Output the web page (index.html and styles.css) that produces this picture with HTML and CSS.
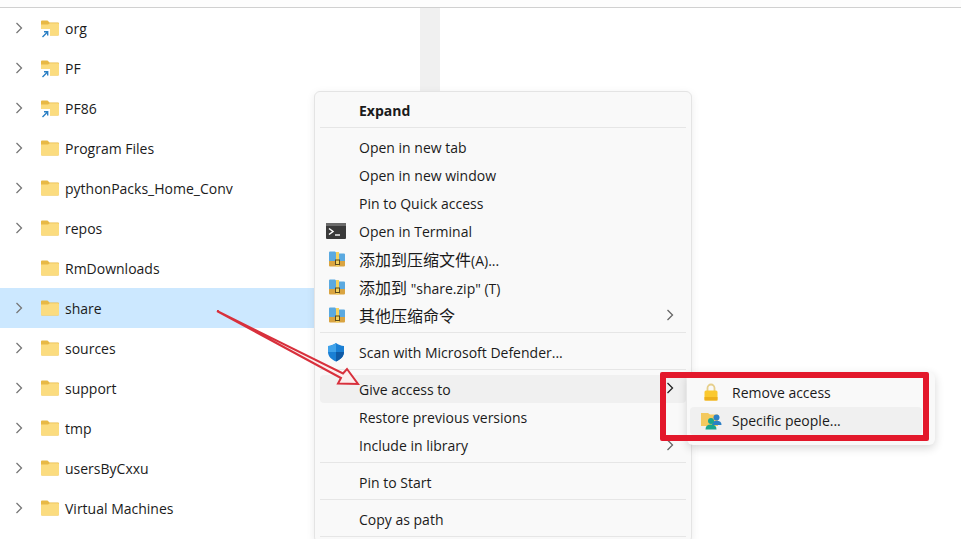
FILE: index.html
```html
<!DOCTYPE html>
<html>
    <head>
        <title>share - File Explorer</title>
        <link rel="stylesheet" href="styles.css">
    </head>
    <body>
      <svg class="defs" width="0" height="0">
        <symbol id="chevron" viewBox="0 0 10 14">
          <path d="M2.5 2 L7.5 7 L2.5 12" fill="none" stroke="currentColor" stroke-width="1.3"/>
        </symbol>
        <symbol id="folder" viewBox="0 0 18 16">
          <path d="M0 1.5 Q0 .5 1 .5 H6.5 L8.5 2.5 H17 Q18 2.5 18 3.5 V14.5 Q18 15.5 17 15.5 H1 Q0 15.5 0 14.5 Z" fill="#e8b945"/>
          <path d="M0 4.5 H7 L8.8 3.2 H17 Q18 3.2 18 4.2 V14.5 Q18 15.5 17 15.5 H1 Q0 15.5 0 14.5 Z" fill="#fbdc7f"/>
        </symbol>
        <symbol id="archive" viewBox="0 0 20 20">
          <path d="M3 3.5 Q3 2.5 4 2.5 H9 L11 4.5 H18 Q19 4.5 19 5.5 V12 H3 Z" fill="#5aa9e0"/>
          <path d="M3 12 H19 V16.5 Q19 17.5 18 17.5 H4 Q3 17.5 3 16.5 Z" fill="#d9a441"/>
          <rect x="10" y="3" width="3" height="14.5" fill="#f5d25e"/>
          <rect x="9.5" y="11" width="4" height="4.5" fill="none" stroke="#5b4a1e" stroke-width="1"/>
        </symbol>
      </svg>

      <div class="topbar"></div>
      <div class="panes">
        <ul class="tree">
          <li class="tree-row"><svg class="chev"><use href="#chevron"/></svg><span class="folder link"><svg class="folder-img"><use href="#folder"/></svg><svg class="link-badge" viewBox="0 0 10 10"><rect width="10" height="10" fill="#fff"/><path d="M2.5 8 L7.5 3 M4 2.8 H7.7 V6.5" fill="none" stroke="#2a7fc4" stroke-width="1.4"/></svg></span>org</li>
          <li class="tree-row"><svg class="chev"><use href="#chevron"/></svg><span class="folder link"><svg class="folder-img"><use href="#folder"/></svg><svg class="link-badge" viewBox="0 0 10 10"><rect width="10" height="10" fill="#fff"/><path d="M2.5 8 L7.5 3 M4 2.8 H7.7 V6.5" fill="none" stroke="#2a7fc4" stroke-width="1.4"/></svg></span>PF</li>
          <li class="tree-row"><svg class="chev"><use href="#chevron"/></svg><span class="folder link"><svg class="folder-img"><use href="#folder"/></svg><svg class="link-badge" viewBox="0 0 10 10"><rect width="10" height="10" fill="#fff"/><path d="M2.5 8 L7.5 3 M4 2.8 H7.7 V6.5" fill="none" stroke="#2a7fc4" stroke-width="1.4"/></svg></span>PF86</li>
          <li class="tree-row"><svg class="chev"><use href="#chevron"/></svg><span class="folder"><svg class="folder-img"><use href="#folder"/></svg></span>Program Files</li>
          <li class="tree-row"><svg class="chev"><use href="#chevron"/></svg><span class="folder"><svg class="folder-img"><use href="#folder"/></svg></span>pythonPacks_Home_Conv</li>
          <li class="tree-row"><svg class="chev"><use href="#chevron"/></svg><span class="folder"><svg class="folder-img"><use href="#folder"/></svg></span>repos</li>
          <li class="tree-row"><span class="chev"></span><span class="folder"><svg class="folder-img"><use href="#folder"/></svg></span>RmDownloads</li>
          <li class="tree-row selected"><svg class="chev"><use href="#chevron"/></svg><span class="folder"><svg class="folder-img"><use href="#folder"/></svg></span>share</li>
          <li class="tree-row"><svg class="chev"><use href="#chevron"/></svg><span class="folder"><svg class="folder-img"><use href="#folder"/></svg></span>sources</li>
          <li class="tree-row"><svg class="chev"><use href="#chevron"/></svg><span class="folder"><svg class="folder-img"><use href="#folder"/></svg></span>support</li>
          <li class="tree-row"><svg class="chev"><use href="#chevron"/></svg><span class="folder"><svg class="folder-img"><use href="#folder"/></svg></span>tmp</li>
          <li class="tree-row"><svg class="chev"><use href="#chevron"/></svg><span class="folder"><svg class="folder-img"><use href="#folder"/></svg></span>usersByCxxu</li>
          <li class="tree-row"><svg class="chev"><use href="#chevron"/></svg><span class="folder"><svg class="folder-img"><use href="#folder"/></svg></span>Virtual Machines</li>
        </ul>
        <div class="scroll-track"></div>
      </div>

      <div class="menu">
        <div class="menu-row strong"><span class="menu-icon"></span>Expand</div>
        <hr class="sep">
        <div class="menu-row"><span class="menu-icon"></span>Open in new tab</div>
        <div class="menu-row"><span class="menu-icon"></span>Open in new window</div>
        <div class="menu-row"><span class="menu-icon"></span>Pin to Quick access</div>
        <div class="menu-row">
          <span class="menu-icon">
            <svg viewBox="0 0 20 20" width="20" height="20"><rect y="2" width="20" height="16" rx="1" fill="#3a3a3a"/><rect y="2" width="20" height="3" fill="#6b6b6b"/><path d="M3 7.5 L7 10.5 L3 13.5" fill="none" stroke="#fff" stroke-width="1.5"/><path d="M9 14 H14" stroke="#fff" stroke-width="1.4"/></svg>
          </span>Open in Terminal</div>
        <div class="menu-row"><span class="menu-icon"><svg width="20" height="20"><use href="#archive"/></svg></span><span><span class="cjk">添加到压缩文件</span>(A)...</span></div>
        <div class="menu-row"><span class="menu-icon"><svg width="20" height="20"><use href="#archive"/></svg></span><span><span class="cjk">添加到</span> "share.zip" (T)</span></div>
        <div class="menu-row"><span class="menu-icon"><svg width="20" height="20"><use href="#archive"/></svg></span><span class="cjk">其他压缩命令</span><svg class="menu-chev"><use href="#chevron"/></svg></div>
        <hr class="sep">
        <div class="menu-row">
          <span class="menu-icon">
            <svg viewBox="0 0 20 20" width="20" height="20"><path d="M10 1 C12.5 3 15 3.6 18 4 V10 C18 14.5 14.5 17.5 10 19.5 C5.5 17.5 2 14.5 2 10 V4 C5 3.6 7.5 3 10 1 Z" fill="#1a7fd4"/><path d="M10 1 V10 H2 V4 C5 3.6 7.5 3 10 1 Z" fill="#3fa2ea"/><path d="M10 10 H18 C18 14.5 14.5 17.5 10 19.5 Z" fill="#0f5aa6"/></svg>
          </span>Scan with Microsoft Defender...</div>
        <hr class="sep">
        <div class="menu-row hover"><span class="menu-icon"></span>Give access to<svg class="menu-chev dark"><use href="#chevron"/></svg></div>
        <div class="menu-row"><span class="menu-icon"></span>Restore previous versions</div>
        <div class="menu-row"><span class="menu-icon"></span>Include in library<svg class="menu-chev"><use href="#chevron"/></svg></div>
        <hr class="sep">
        <div class="menu-row"><span class="menu-icon"></span>Pin to Start</div>
        <hr class="sep">
        <div class="menu-row"><span class="menu-icon"></span>Copy as path</div>
        <hr class="sep">
      </div>

      <div class="submenu">
        <div class="sub-row">
          <span class="sub-icon">
            <svg viewBox="0 0 16 20" width="16" height="20"><path d="M4.5 9 V6 A3.5 3.5 0 0 1 11.5 6 V9" fill="none" stroke="#e6cf8c" stroke-width="1.8"/><rect x="1.5" y="8.5" width="13" height="10" rx="1.5" fill="#fbc92f"/><rect x="1.5" y="15" width="13" height="3.5" fill="#eeb01c"/></svg>
          </span>Remove access</div>
        <div class="sub-row hover">
          <span class="sub-icon">
            <svg viewBox="0 0 21 19" width="21" height="19"><path d="M0 2 H7 L9 3.5 H17 V15 H0 Z" fill="#f3c95f"/><circle cx="15.5" cy="6.5" r="3" fill="#2c7fc6"/><path d="M11 14 Q11 9.8 15.5 9.8 Q20.5 9.8 20.5 14 Z" fill="#2c7fc6"/><circle cx="10" cy="10" r="3" fill="#1aa58e"/><path d="M4.5 18.5 Q4.5 13.5 10 13.5 Q15.5 13.5 15.5 18.5 Z" fill="#1aa58e"/></svg>
          </span>Specific people...</div>
      </div>

      <div class="red-box"></div>

      <svg class="arrow" width="961" height="539" viewBox="0 0 961 539">
        <path d="M217 311 L343 373.5 L347 369 L358 384 L338 383.5 L341 378 Z" fill="#fbeeee" stroke="#d8303c" stroke-width="2" stroke-linejoin="miter"/>
      </svg>
    </body>
</html>
```

FILE: styles.css
```css
html, body {
    margin: 0px;
    height: 100%;
    overflow: hidden;
}
body {
    position: relative;
    background-color: #ffffff;
    color: #1b1b1b;
    font-family: "Open Sans", "Noto Sans CJK SC", sans-serif;
    font-size: 14px;
}
.defs {
    position: absolute;
}
.topbar {
    height: 7px;
    background-color: #fdfdfd;
    border-bottom: 1px solid #d0d0d0;
}
.panes {
    display: flex;
}
.tree {
    width: 420px;
    margin: 0px;
    padding: 0px;
    list-style: none;
}
.tree-row {
    height: 40px;
    display: flex;
    align-items: center;
    padding-left: 14px;
}
.tree-row.selected {
    background-color: #cce8ff;
}
.chev {
    width: 10px;
    height: 14px;
    color: #777777;
    margin-right: 17px;
}
.folder {
    position: relative;
    width: 18px;
    height: 16px;
    margin-right: 6px;
}
.folder-img {
    width: 18px;
    height: 16px;
    display: block;
}
.link-badge {
    position: absolute;
    left: -1px;
    bottom: -3px;
    width: 10px;
    height: 10px;
}
.scroll-track {
    width: 20px;
    height: 531px;
    background-color: #f0f0f0;
}
.menu {
    position: absolute;
    left: 314px;
    top: 91px;
    width: 378px;
    box-sizing: border-box;
    padding: 4px 5px 0px;
    background-color: #f9f9f9;
    border: 1px solid #e4e4e4;
    border-radius: 6px;
    box-shadow: 0px 2px 8px rgba(0, 0, 0, 0.08);
}
.menu-row {
    height: 28px;
    display: flex;
    align-items: center;
    position: relative;
    border-radius: 4px;
}
.menu-row.strong {
    font-weight: 700;
}
.menu-row.hover {
    background-color: #f0f0f0;
}
.menu-icon {
    width: 33px;
    padding-left: 6px;
    display: flex;
    align-items: center;
    flex: none;
}
.cjk {
    font-size: 16px;
}
.menu-chev {
    position: absolute;
    right: 11px;
    width: 10px;
    height: 14px;
    color: #666666;
}
.menu-chev.dark {
    color: #222222;
    top: 6px;
}
.sep {
    height: 1px;
    margin: 3px 0px 5px;
    border: 0px;
    background-color: #e6e6e6;
}
.submenu {
    position: absolute;
    left: 687px;
    top: 372px;
    width: 248px;
    height: 73px;
    box-sizing: border-box;
    padding: 6px 13px 0px 3px;
    background-color: #f9f9f9;
    border-radius: 6px;
    box-shadow: 0px 3px 10px rgba(0, 0, 0, 0.16);
}
.sub-row {
    height: 28.5px;
    display: flex;
    align-items: center;
    border-radius: 4px;
}
.sub-row.hover {
    background-color: #f0f0f0;
}
.sub-icon {
    width: 42px;
    padding-right: 0px;
    display: flex;
    align-items: center;
    justify-content: center;
    flex: none;
}
.red-box {
    position: absolute;
    left: 660px;
    top: 372px;
    width: 257px;
    height: 57px;
    border: 6px solid #e3182b;
    border-radius: 2px;
}
.arrow {
    position: absolute;
    left: 0px;
    top: 0px;
}
```
